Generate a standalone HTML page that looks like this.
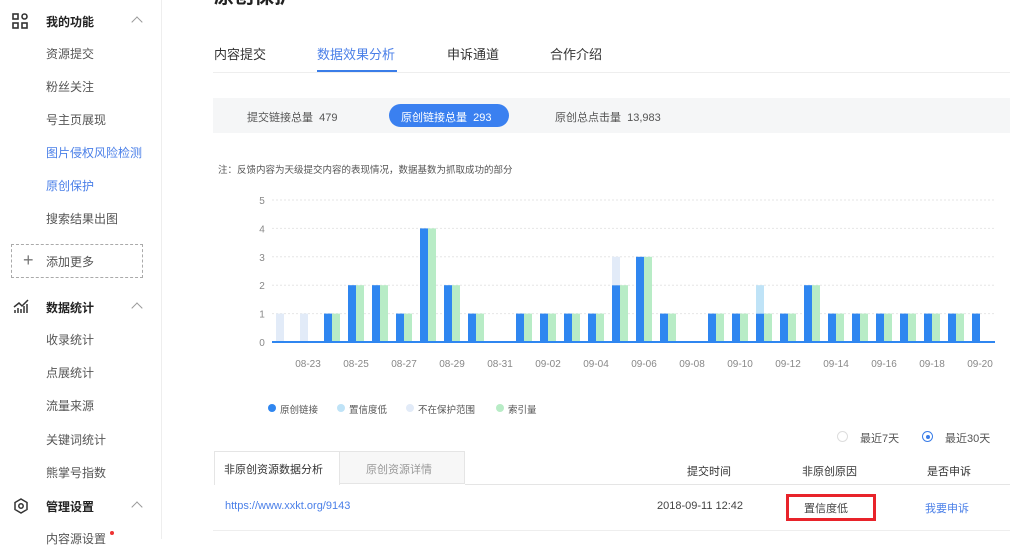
<!DOCTYPE html>
<html><head><meta charset="utf-8"><style>
*{margin:0;padding:0;box-sizing:border-box}
body{width:1024px;height:539px;overflow:hidden;background:#fff;font-family:"Liberation Sans","Noto Sans CJK SC",sans-serif;color:#333;position:relative}
.a{position:absolute;white-space:nowrap}
.side{font-size:12px;color:#555}
.hd{font-size:12px;font-weight:bold;color:#222}
.chev{position:absolute;width:8px;height:8px;border-left:1.5px solid #999;border-top:1.5px solid #999;transform:rotate(45deg)}
</style></head><body>
<div class="a" style="left:161px;top:0;width:1px;height:539px;background:#eee"></div>
<svg class="a" style="left:12px;top:13px" width="16" height="16" viewBox="0 0 16 16" fill="none" stroke="#333" stroke-width="1.6"><rect x="1" y="1" width="5" height="5"/><rect x="1" y="10" width="5" height="5"/><rect x="10" y="10" width="5" height="5"/><circle cx="12.5" cy="3.5" r="2.5"/></svg>
<div class="a hd" style="left:46px;top:13px">我的功能</div><div class="chev" style="left:133px;top:18px"></div>
<div class="a side" style="left:46px;top:45px">资源提交</div>
<div class="a side" style="left:46px;top:78px">粉丝关注</div>
<div class="a side" style="left:46px;top:111px">号主页展现</div>
<div class="a side" style="left:46px;top:144px;color:#4a7fe8">图片侵权风险检测</div>
<div class="a side" style="left:46px;top:177px;color:#4a7fe8">原创保护</div>
<div class="a side" style="left:46px;top:210px">搜索结果出图</div>
<div class="a" style="left:11px;top:244px;width:132px;height:34px;border:1px dashed #aaa"></div>
<div class="a" style="left:23px;top:250px;font-size:18px;color:#777">+</div>
<div class="a side" style="left:46px;top:253px">添加更多</div>
<svg class="a" style="left:13px;top:298px" width="16" height="16" viewBox="0 0 16 16" fill="none" stroke="#333" stroke-width="1.5"><path d="M1 9L6 5L9 8L15 2"/><path d="M2 15V12M5 15V10M8 15V11M11 15V8M14 15V6"/></svg>
<div class="a hd" style="left:46px;top:299px">数据统计</div><div class="chev" style="left:133px;top:304px"></div>
<div class="a side" style="left:46px;top:331px">收录统计</div>
<div class="a side" style="left:46px;top:364px">点展统计</div>
<div class="a side" style="left:46px;top:397px">流量来源</div>
<div class="a side" style="left:46px;top:431px">关键词统计</div>
<div class="a side" style="left:46px;top:464px">熊掌号指数</div>
<svg class="a" style="left:13px;top:498px" width="16" height="16" viewBox="0 0 16 16" fill="none" stroke="#333" stroke-width="1.5"><path d="M8 1L14 4.5V11.5L8 15L2 11.5V4.5Z"/><circle cx="8" cy="8" r="2.2"/></svg>
<div class="a hd" style="left:46px;top:498px">管理设置</div><div class="chev" style="left:133px;top:503px"></div>
<div class="a side" style="left:46px;top:530px">内容源设置</div>
<div class="a" style="left:110px;top:531px;width:4px;height:4px;border-radius:2px;background:#e33"></div>
<div class="a" style="left:214px;top:-20px;font-size:20px;font-weight:bold;color:#222">原创保护</div>
<div class="a" style="left:214px;top:44px;font-size:13px">内容提交</div>
<div class="a" style="left:317px;top:44px;font-size:13px;color:#4a7fe8">数据效果分析</div>
<div class="a" style="left:447px;top:44px;font-size:13px">申诉通道</div>
<div class="a" style="left:550px;top:44px;font-size:13px">合作介绍</div>
<div class="a" style="left:213px;top:72px;width:797px;height:1px;background:#eee"></div>
<div class="a" style="left:317px;top:70px;width:80px;height:2px;background:#3a7de8"></div>
<div class="a" style="left:213px;top:98px;width:797px;height:35px;background:#f5f6f7"></div>
<div class="a" style="left:247px;top:109px;font-size:11px;color:#555">提交链接总量 &nbsp;479</div>
<div class="a" style="left:389px;top:104px;width:120px;height:23px;border-radius:12px;background:#3a80f0"></div>
<div class="a" style="left:401px;top:109px;font-size:11px;color:#fff">原创链接总量 &nbsp;293</div>
<div class="a" style="left:555px;top:109px;font-size:11px;color:#555">原创总点击量 &nbsp;13,983</div>
<div class="a" style="left:218px;top:162px;font-size:9.5px;color:#555">注：反馈内容为天级提交内容的表现情况，数据基数为抓取成功的部分</div>
<svg class="a" style="left:0;top:0" width="1024" height="420" id="ch"></svg>
<div class="a" style="left:268px;top:404px;width:8px;height:8px;border-radius:4px;background:#2f86f0"></div>
<div class="a" style="left:280px;top:402px;font-size:9.5px;color:#555">原创链接</div>
<div class="a" style="left:337px;top:404px;width:8px;height:8px;border-radius:4px;background:#bfe3f7"></div>
<div class="a" style="left:349px;top:402px;font-size:9.5px;color:#555">置信度低</div>
<div class="a" style="left:406px;top:404px;width:8px;height:8px;border-radius:4px;background:#e2ebf8"></div>
<div class="a" style="left:418px;top:402px;font-size:9.5px;color:#555">不在保护范围</div>
<div class="a" style="left:496px;top:404px;width:8px;height:8px;border-radius:4px;background:#b8ecc6"></div>
<div class="a" style="left:508px;top:402px;font-size:9.5px;color:#555">索引量</div>
<div class="a" style="left:837px;top:431px;width:11px;height:11px;border-radius:6px;border:1px solid #ddd"></div>
<div class="a" style="left:860px;top:430px;font-size:11px;color:#555">最近7天</div>
<div class="a" style="left:922px;top:431px;width:11px;height:11px;border-radius:6px;border:1px solid #3a7de8"></div>
<div class="a" style="left:925.5px;top:434.5px;width:4px;height:4px;border-radius:2px;background:#3a7de8"></div>
<div class="a" style="left:945px;top:430px;font-size:11px;color:#555">最近30天</div>
<div class="a" style="left:340px;top:451px;width:125px;height:33px;background:#f7f7f7;border:1px solid #e5e5e5;border-left:none"></div>
<div class="a" style="left:214px;top:451px;width:126px;height:34px;background:#fff;border:1px solid #e5e5e5;border-bottom:none"></div>
<div class="a" style="left:224px;top:461px;font-size:11px;color:#333">非原创资源数据分析</div>
<div class="a" style="left:366px;top:461px;font-size:11px;color:#999">原创资源详情</div>
<div class="a" style="left:687px;top:463px;font-size:11px;color:#333">提交时间</div>
<div class="a" style="left:802px;top:463px;font-size:11px;color:#333">非原创原因</div>
<div class="a" style="left:927px;top:463px;font-size:11px;color:#333">是否申诉</div>
<div class="a" style="left:465px;top:484px;width:545px;height:1px;background:#e5e5e5"></div>
<div class="a" style="left:225px;top:500px;font-size:11px;color:#4a7fe8">https://www.xxkt.org/9143</div>
<div class="a" style="left:657px;top:500px;font-size:11px;color:#444">2018-09-11 12:42</div>
<div class="a" style="left:786px;top:494px;width:90px;height:27px;border:3px solid #e8232a"></div>
<div class="a" style="left:804px;top:500px;font-size:11px;color:#444">置信度低</div>
<div class="a" style="left:925px;top:500px;font-size:11px;color:#4a7fe8">我要申诉</div>
<div class="a" style="left:213px;top:530px;width:797px;height:1px;background:#eee"></div>
<script>
var s='',B=[0,0,1,2,2,1,4,2,1,0,1,1,1,1,2,3,1,0,1,1,1,1,2,1,1,1,1,1,1,1],
G=[0,0,1,2,2,1,4,2,1,0,1,1,1,1,2,3,1,0,1,1,1,1,2,1,1,1,1,1,1,0],u=28.4,b=342;
for(var k=0;k<=5;k++){var y=b-k*u;s+='<line x1="272" x2="995" y1="'+y+'" y2="'+y+'" stroke="#e6e6e6" stroke-dasharray="2,2"/>';s+='<text x="262" y="'+(y+4)+'" font-size="10" fill="#888" text-anchor="middle">'+k+'</text>';}
for(var i=0;i<30;i++){var c=284+24*i;
if(B[i])s+='<rect x="'+(c-8)+'" y="'+(b-B[i]*u)+'" width="8" height="'+B[i]*u+'" fill="#2f86f0"/>';
if(G[i])s+='<rect x="'+c+'" y="'+(b-G[i]*u)+'" width="8" height="'+G[i]*u+'" fill="#b8ecc6"/>';
if(i==0||i==1)s+='<rect x="'+(c-8)+'" y="'+(b-u)+'" width="8" height="'+u+'" fill="#e2ebf8"/>';
if(i==14)s+='<rect x="'+(c-8)+'" y="'+(b-3*u)+'" width="8" height="'+u+'" fill="#e2ebf8"/>';
if(i==20)s+='<rect x="'+(c-8)+'" y="'+(b-2*u)+'" width="8" height="'+u+'" fill="#bfe3f7"/>';
if(i%2==1){var d=i<10?'08-'+(22+i):'09-'+('0'+(i-9)).slice(-2);s+='<text x="'+c+'" y="367" font-size="10" fill="#888" text-anchor="middle">'+d+'</text>';}}
s+='<rect x="272" y="341" width="723" height="2" fill="#2f86f0"/>';
document.getElementById('ch').innerHTML=s;
</script>
</body></html>
